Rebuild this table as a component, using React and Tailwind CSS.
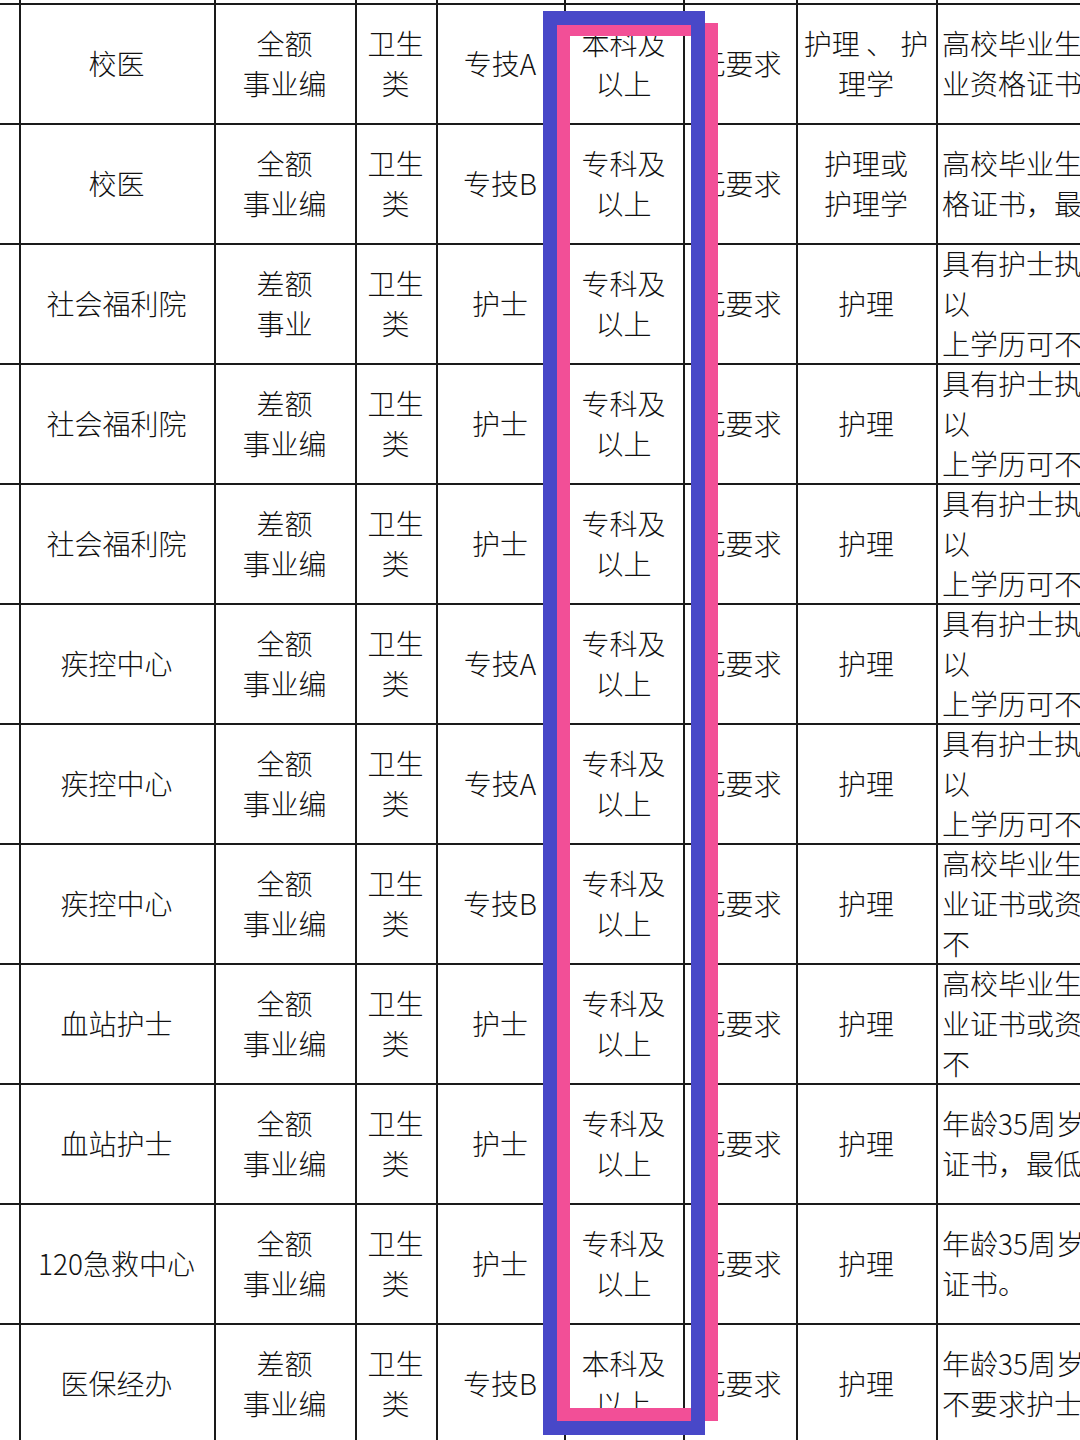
import React from 'react';

const rows = [
  ['校医', ['全额', '事业编'], '专技A', ['本科及', '以上'], ['护理 、 护', '理学'], ['高校毕业生', '业资格证书']],
  ['校医', ['全额', '事业编'], '专技B', ['专科及', '以上'], ['护理或', '护理学'], ['高校毕业生', '格证书，最']],
  ['社会福利院', ['差额', '事业'], '护士', ['专科及', '以上'], ['护理'], ['具有护士执', '以', '上学历可不']],
  ['社会福利院', ['差额', '事业编'], '护士', ['专科及', '以上'], ['护理'], ['具有护士执', '以', '上学历可不']],
  ['社会福利院', ['差额', '事业编'], '护士', ['专科及', '以上'], ['护理'], ['具有护士执', '以', '上学历可不']],
  ['疾控中心', ['全额', '事业编'], '专技A', ['专科及', '以上'], ['护理'], ['具有护士执', '以', '上学历可不']],
  ['疾控中心', ['全额', '事业编'], '专技A', ['专科及', '以上'], ['护理'], ['具有护士执', '以', '上学历可不']],
  ['疾控中心', ['全额', '事业编'], '专技B', ['专科及', '以上'], ['护理'], ['高校毕业生', '业证书或资', '不']],
  ['血站护士', ['全额', '事业编'], '护士', ['专科及', '以上'], ['护理'], ['高校毕业生', '业证书或资', '不']],
  ['血站护士', ['全额', '事业编'], '护士', ['专科及', '以上'], ['护理'], ['年龄35周岁', '证书，最低']],
  ['120急救中心', ['全额', '事业编'], '护士', ['专科及', '以上'], ['护理'], ['年龄35周岁', '证书。']],
  ['医保经办', ['差额', '事业编'], '专技B', ['本科及', '以上'], ['护理'], ['年龄35周岁', '不要求护士']],
];

const Lines = ({ items }) => items.map((t, i) => <div key={i} className="whitespace-nowrap">{t}</div>);

const Cell = ({ children, left }) => (
  <div className={`bg-white flex flex-col justify-center overflow-hidden pb-[3px] ${left ? 'items-start pl-[4px]' : 'items-center text-center pr-[2px]'}`}>
    {children}
  </div>
);

export default function App() {
  return (
    <div
      className="relative w-[1080px] h-[1440px] overflow-hidden bg-white text-[#111] text-[28px] leading-[40px] font-light"
      style={{ fontFamily: '"Noto Sans CJK SC", "Noto Sans", sans-serif' }}
    >
      <div className="grid grid-cols-[19px_193px_139px_79px_126px_117px_111px_138px_262px] grid-rows-[3px_repeat(12,118px)] gap-[2px] bg-[#1a1a1a] w-[1200px]">
        {Array.from({ length: 9 }).map((_, i) => (
          <div key={'t' + i} className="bg-white" />
        ))}
        {rows.map((r, i) => (
          <React.Fragment key={i}>
            <Cell />
            <Cell>{r[0]}</Cell>
            <Cell><Lines items={r[1]} /></Cell>
            <Cell><Lines items={['卫生', '类']} /></Cell>
            <Cell>{r[2]}</Cell>
            <Cell><Lines items={r[3]} /></Cell>
            <Cell>无要求</Cell>
            <Cell><Lines items={r[4]} /></Cell>
            <Cell left><Lines items={r[5]} /></Cell>
          </React.Fragment>
        ))}
      </div>

      {/* highlight marks */}
      <div className="absolute left-[557px] top-[23px] w-[161px] h-[1398px] border-[13px] border-[#f24f97]" />
      <div className="absolute left-[543px] top-[11px] w-[162px] h-[1424px] border-[14px] border-[#4848c8]" />
    </div>
  );
}
